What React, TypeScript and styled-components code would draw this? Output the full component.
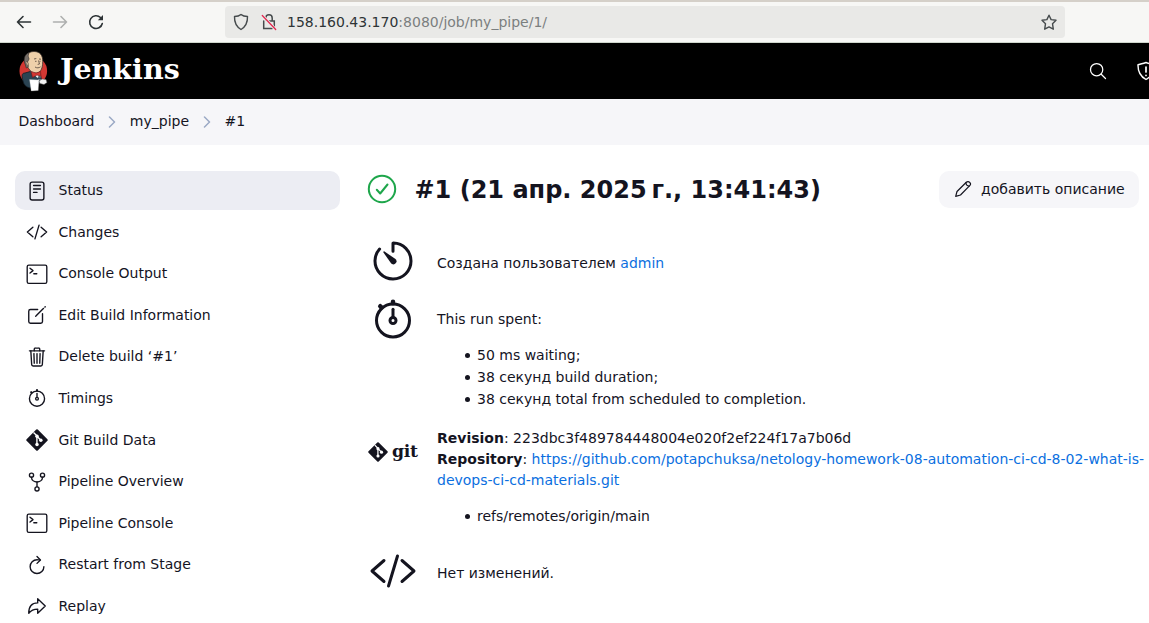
import React from "react";
import styled, { createGlobalStyle } from "styled-components";
import {
  IoReaderOutline, IoCodeSlashOutline, IoCreateOutline, IoTrashOutline, IoStopwatchOutline,
  IoGitNetworkOutline, IoRefreshOutline, IoArrowRedoOutline, IoSearchOutline, IoTimerOutline,
} from "react-icons/io5";

const Global = createGlobalStyle`
  * { box-sizing: border-box; }
  body { margin: 0; background: #fff; }
`;

const Page = styled.div`
  width: 1149px;
  height: 623px;
  overflow: hidden;
  display: flex;
  flex-direction: column;
  font: 14px/21px "DejaVu Sans", sans-serif;
  color: #14141f;
`;

const BrowserBar = styled.div`
  height: 43px;
  flex: none;
  display: flex;
  align-items: center;
  background: #f7f7f5;
  border-top: 2px solid #d5d0c9;
  border-bottom: 1px solid #cfd6cc;
  color: #2e3436;
`;

const NavButtons = styled.div`
  width: 225px;
  display: flex;
  gap: 16px;
  padding-left: 14px;
  svg { display: block; }
`;

const AddressBar = styled.div`
  width: 840px;
  height: 32px;
  display: flex;
  align-items: center;
  padding: 0 8px;
  border-radius: 4px;
  background: #e9e9e7;
`;

const LockSlot = styled.span`
  display: flex;
  margin-left: 12px;
`;

const Url = styled.span`
  flex: 1;
  margin: 1px 0 0 10px;
  font-size: 14px;
  color: #2e3436;
`;

const UrlRest = styled.span`
  color: #7b7f7f;
`;

const Header = styled.header`
  height: 56px;
  flex: none;
  display: flex;
  align-items: center;
  background: #000;
  color: #fff;
  padding-left: 18px;
`;

const Brand = styled.div`
  display: flex;
  align-items: center;
  flex: 1;
`;

const BrandName = styled.span`
  margin: -5px 0 0 12px;
  font: bold 28.5px/36px "DejaVu Serif", serif;
`;

const HeaderIcons = styled.div`
  display: flex;
  align-items: center;
  gap: 29px;
  width: 61px;
  overflow: hidden;
  svg { flex: none; }
`;

const Breadcrumbs = styled.nav`
  height: 46px;
  flex: none;
  display: flex;
  align-items: center;
  gap: 13.7px;
  padding: 0 18.5px 2px;
  background: #f6f6f9;
`;

const Body = styled.div`
  flex: 1;
  display: flex;
  padding: 26px 0 0 15px;
`;

const Sidebar = styled.aside`
  width: 325px;
  flex: none;
  display: flex;
  flex-direction: column;
  gap: 2.6px;
`;

const Task = styled.a<{ $active?: boolean }>`
  height: 39px;
  flex: none;
  display: flex;
  align-items: center;
  gap: 10.5px;
  padding: 0 11px;
  border-radius: 10px;
  background: ${(p) => (p.$active ? "#ecedf3" : "transparent")};
  svg { width: 22px; height: 22px; flex: none; }
`;

const Main = styled.main`
  flex: 1;
  margin-left: 25px;
`;

const TitleBar = styled.div`
  display: flex;
  align-items: center;
  height: 37px;
  margin-bottom: 29px;
  padding-right: 10px;
  > svg { margin-top: -1px; }
`;

const Title = styled.h1`
  flex: 1;
  margin: 0 0 0 15.5px;
  font-size: 24px;
  line-height: 34px;
  white-space: nowrap;
`;

const EditButton = styled.button`
  display: flex;
  align-items: center;
  gap: 9px;
  width: 200px;
  height: 37px;
  padding: 0 0 1px 15px;
  border: 0;
  border-radius: 10px;
  background: #f6f6f9;
  color: inherit;
  font: inherit;
  white-space: nowrap;
`;

const Row = styled.section<{ $height: number; $offset: number }>`
  display: flex;
  height: ${(p) => p.$height}px;
  padding-left: 4px;
  gap: 20px;
  > div:last-child { padding-top: ${(p) => p.$offset}px; }
`;

const IconCell = styled.div`
  width: 48px;
  height: 48px;
  flex: none;
  display: flex;
  align-items: center;
  justify-content: center;
`;

const Content = styled.div`
  flex: 1;
`;

const List = styled.ul`
  margin: 14px 0 0;
  padding: 0 0 0 28px;
  line-height: 22px;
  list-style: none;
`;

const Item = styled.li`
  display: flex;
  align-items: center;
  gap: 7px;
  &::before {
    content: "";
    width: 5px;
    height: 5px;
    margin-top: 1px;
    border-radius: 50%;
    background: #14141f;
  }
`;

const Link = styled.a`
  color: #0b6fe0;
`;

const GitLogo = styled.div`
  display: flex;
  align-items: center;
  gap: 3.5px;
`;

const GitWord = styled.span`
  font: bold 17.3px/20px "DejaVu Serif", serif;
  letter-spacing: -0.3px;
  margin-top: -3px;
`;

const GitIcon = ({ size = 22 }: { size?: number }) => (
  <svg width={size} height={size} viewBox="0 0 24 24">
    <path d="M12 1.500 22.500 12 12 22.500 1.500 12z" fill="currentColor" stroke="currentColor" strokeWidth="2.400" strokeLinejoin="round" />
    <path d="M8.200 3.800l3.700 3.700v9.500M12 8l4.200 4.200" fill="none" stroke="#fff" strokeWidth="1.500" />
    <circle cx="12" cy="8" r="1.900" fill="#fff" />
    <circle cx="12" cy="16.800" r="1.900" fill="#fff" />
    <circle cx="16.200" cy="12.200" r="1.900" fill="#fff" />
  </svg>
);

const SuccessIcon = () => (
  <svg width="34" height="34" viewBox="0 0 34 34" fill="none" stroke="#1ea64b" strokeWidth="2" strokeLinecap="round" strokeLinejoin="round">
    <circle cx="17" cy="17" r="13.200" />
    <path d="M11.800 17.800l3.400 3.700 7.300-9" />
  </svg>
);

const PencilIcon = () => (
  <svg width="18" height="18" viewBox="0 0 18 18" fill="none" stroke="currentColor" strokeWidth="1.200" strokeLinejoin="round" strokeLinecap="round">
    <path d="M1.700 16.300l1.300-4.800L12.300 2.300a2.400 2.400 0 0 1 3.400 3.400L6.500 15z" />
    <path d="M12 2.700c-.2 2 1.200 3.300 3.200 3.300" />
  </svg>
);

const ConsoleIcon = () => (
  <svg viewBox="0 0 22 22" fill="none" stroke="currentColor" strokeWidth="1.35" strokeLinecap="round" strokeLinejoin="round">
    <rect x="1.2" y="2.1" width="19.6" height="18.3" rx="1.6" />
    <path d="M4 5.2 7 7.6 4 10M7.8 10.7h3" />
  </svg>
);

const Chevron = () => (
  <svg width="8" height="14" viewBox="0 0 8 14" fill="none" stroke="#9ba9c5" strokeWidth="1.5" strokeLinecap="round" strokeLinejoin="round">
    <path d="M1.5 3l5 5-5 5" />
  </svg>
);

const JenkinsLogo = () => (
  <svg width="30" height="42" viewBox="0 0 30 42">
    <ellipse cx="15.3" cy="21" rx="13.8" ry="14" fill="#d33833" />
    <path d="M7 23C3 23 4 27 5 31c1 4 3 6 7 7l12-6-2-9-8-2z" fill="#2b4453" stroke="#101c24" strokeWidth=".8" />
    <path d="M7 13C6 6 10 1.5 16 1.5c6 0 9 4 8.7 10-.1 4-.4 9-4.7 11.5-5 1-8-2-10-5.500z" fill="#eed0aa" stroke="#3c332e" strokeWidth=".8" />
    <path d="M11 2.800C7 4 5.800 8 6.500 12l1.800 6 2-1-.8-5 1.600-3-1-3z" fill="#766f69" stroke="#302c2a" strokeWidth=".6" />
    <path d="M8 12c2-1 2.500 2 2 4" fill="#eed0aa" stroke="#3c332e" strokeWidth=".6" />
    <path d="M16 9l2.300-.5M21 9l2 .2M17 11.300h1.500M21.500 11.300h1M20.500 10.500l1 3.500-1.800.4M17 17c2 1.300 4 1 5.500-.2" fill="none" stroke="#51423a" strokeWidth=".8" />
    <path d="M12.500 21l7 7 3-5-3 1z" fill="#f4f4f4" />
    <path d="M13 21.500l5 1.500 4.500-1.500.5 5-4-1.500-4.500 2.500z" fill="#d33833" stroke="#681a1a" strokeWidth=".6" />
    <path d="M20 27h3M20 29.500h3" stroke="#8194a0" strokeWidth=".8" />
    <path d="M11.500 29.500l9.500.5-.8 10.500-7 .4z" fill="#fff" stroke="#aaa" strokeWidth=".3" />
    <path d="M21 31l3-2 4 .5 1 3-3 2-4-1z" fill="#f2f2f2" stroke="#555" strokeWidth=".5" />
  </svg>
);

const NavIcons = () => (
  <NavButtons>
    <svg width="20" height="20" viewBox="0 0 20 20" fill="none" stroke="#2e3436" strokeWidth="1.6" strokeLinecap="round" strokeLinejoin="round">
      <path d="M16.500 10H3.500M9 4.500 3.500 10 9 15.500" />
    </svg>
    <svg width="20" height="20" viewBox="0 0 20 20" fill="none" stroke="#aeb0af" strokeWidth="1.6" strokeLinecap="round" strokeLinejoin="round">
      <path d="M3.500 10h13M11 4.500l5.500 5.500-5.500 5.500" />
    </svg>
    <svg width="20" height="20" viewBox="0 0 20 20" fill="none" stroke="#2e3436" strokeWidth="1.6" strokeLinecap="round">
      <path d="M16.300 11.500A6.400 6.400 0 1 1 14.500 5.500" />
      <path d="M17 3v5.200h-5.200z" fill="#2e3436" stroke="none" />
    </svg>
  </NavButtons>
);

const ShieldIcon = () => (
  <svg width="16" height="18" viewBox="0 0 16 18" fill="none" stroke="#464b4d" strokeWidth="1.4" strokeLinejoin="round">
    <path d="M8 1.500C6.500 2.800 4 3.500 1.500 3.500 1.300 9.500 3 13.500 8 16.500c5-3 6.700-7 6.500-13C12 3.500 9.500 2.800 8 1.500z" />
  </svg>
);

const InsecureIcon = () => (
  <svg width="16" height="18" viewBox="0 0 16 18" fill="none" stroke="#464b4d" strokeWidth="1.5" strokeLinecap="round">
    <path d="M4.800 7V5a3.200 3.200 0 0 1 6.400 0v3M2.700 8v7.500h8.500M8 8h5.300v7" />
    <path d="M1.500 2.500l13 14" stroke="#e9e9e7" strokeWidth="3" />
    <path d="M1.300 2.500l13.400 14" stroke="#e22850" strokeWidth="1.300" />
  </svg>
);

const StarIcon = () => (
  <svg width="16" height="17" viewBox="0 0 16 17" fill="none" stroke="#464b4d" strokeWidth="1.400" strokeLinejoin="round">
    <path d="M8 1.200l2.100 4.400 4.900.7-3.500 3.400.8 5.500L8 12.900l-4.300 2.300.8-5.500L1 6.300l4.900-.7z" />
  </svg>
);

const AlertShield = () => (
  <svg width="18" height="20" viewBox="0 0 18 20" fill="none" stroke="#fff" strokeWidth="1.400" strokeLinecap="round" strokeLinejoin="round">
    <path d="M9 1.500C6.500 2.500 3.500 3 1 3.700.8 11 3.500 15.500 9 18.500c5.500-3 8.200-7.500 8-14.800C14.500 3 11.500 2.500 9 1.500z" />
    <path d="M9 6v5M9 14.300v.1" strokeWidth="1.700" />
  </svg>
);

const tasks: { label: string; icon: React.ReactNode }[] = [
  { label: "Status", icon: <IoReaderOutline /> },
  { label: "Changes", icon: <IoCodeSlashOutline /> },
  { label: "Console Output", icon: <ConsoleIcon /> },
  { label: "Edit Build Information", icon: <IoCreateOutline /> },
  { label: "Delete build ‘#1’", icon: <IoTrashOutline /> },
  { label: "Timings", icon: <IoStopwatchOutline /> },
  { label: "Git Build Data", icon: <GitIcon /> },
  { label: "Pipeline Overview", icon: <IoGitNetworkOutline /> },
  { label: "Pipeline Console", icon: <ConsoleIcon /> },
  { label: "Restart from Stage", icon: <IoRefreshOutline /> },
  { label: "Replay", icon: <IoArrowRedoOutline /> },
];

export default function App() {
  return (
    <Page>
      <Global />
      <BrowserBar>
        <NavIcons />
        <AddressBar>
          <ShieldIcon />
          <LockSlot><InsecureIcon /></LockSlot>
          <Url>158.160.43.170<UrlRest>:8080/job/my_pipe/1/</UrlRest></Url>
          <StarIcon />
        </AddressBar>
      </BrowserBar>
      <Header>
        <Brand>
          <JenkinsLogo />
          <BrandName>Jenkins</BrandName>
        </Brand>
        <HeaderIcons>
          <IoSearchOutline size={20} />
          <AlertShield />
        </HeaderIcons>
      </Header>
      <Breadcrumbs>
        <span>Dashboard</span>
        <Chevron />
        <span>my_pipe</span>
        <Chevron />
        <span>#1</span>
      </Breadcrumbs>
      <Body>
        <Sidebar>
          {tasks.map((task, i) => (
            <Task key={task.label} $active={i === 0}>{task.icon}{task.label}</Task>
          ))}
        </Sidebar>
        <Main>
          <TitleBar>
            <SuccessIcon />
            <Title>#1 (21 апр. 2025{"\u202f"}г., 13:41:43)</Title>
            <EditButton><PencilIcon />добавить описание</EditButton>
          </TitleBar>
          <Row $height={58} $offset={16}>
            <IconCell><IoTimerOutline size={48} /></IconCell>
            <Content>Создана пользователем <Link>admin</Link></Content>
          </Row>
          <Row $height={133} $offset={14}>
            <IconCell><IoStopwatchOutline size={48} /></IconCell>
            <Content>
              This run spent:
              <List>
                <Item>50 ms waiting;</Item>
                <Item>38 секунд build duration;</Item>
                <Item>38 секунд total from scheduled to completion.</Item>
              </List>
            </Content>
          </Row>
          <Row $height={119} $offset={0}>
            <IconCell><GitLogo><GitIcon size={20} /><GitWord>git</GitWord></GitLogo></IconCell>
            <Content>
              <b>Revision</b>: 223dbc3f489784448004e020f2ef224f17a7b06d<br />
              <b>Repository</b>: <Link>https://github.com/potapchuksa/netology-homework-08-automation-ci-cd-8-02-what-is-devops-ci-cd-materials.git</Link>
              <List><Item>refs/remotes/origin/main</Item></List>
            </Content>
          </Row>
          <Row $height={48} $offset={16}>
            <IconCell><IoCodeSlashOutline size={48} /></IconCell>
            <Content>Нет изменений.</Content>
          </Row>
        </Main>
      </Body>
    </Page>
  );
}
